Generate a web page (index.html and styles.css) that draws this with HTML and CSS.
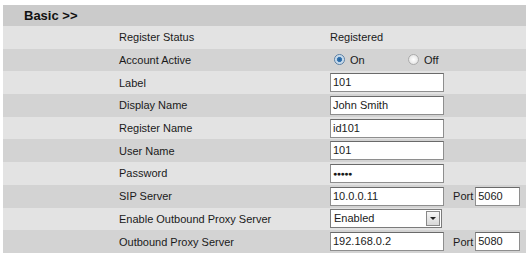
FILE: index.html
```html
<!DOCTYPE html>
<html lang="en">
<head>
    <meta charset="UTF-8">
    <title>Basic Account Settings</title>
    <link rel="stylesheet" href="styles.css">
</head>
<body>
    <table class="settings">
        <tr class="head">
            <td colspan="2">Basic &gt;&gt;</td>
        </tr>
        <tr class="light">
            <td class="name">Register Status</td>
            <td class="value">Registered</td>
        </tr>
        <tr class="dark">
            <td class="name">Account Active</td>
            <td class="value">
                <label class="radio"><span class="dot on"></span>On</label>
                <label class="radio"><span class="dot"></span>Off</label>
            </td>
        </tr>
        <tr class="light">
            <td class="name">Label</td>
            <td class="value"><span class="field">101</span></td>
        </tr>
        <tr class="dark">
            <td class="name">Display Name</td>
            <td class="value"><span class="field">John Smith</span></td>
        </tr>
        <tr class="light">
            <td class="name">Register Name</td>
            <td class="value"><span class="field">id101</span></td>
        </tr>
        <tr class="dark">
            <td class="name">User Name</td>
            <td class="value"><span class="field">101</span></td>
        </tr>
        <tr class="light">
            <td class="name">Password</td>
            <td class="value"><span class="field pass">&#9679;&#9679;&#9679;&#9679;&#9679;</span></td>
        </tr>
        <tr class="dark">
            <td class="name">SIP Server</td>
            <td class="value">
                <span class="field">10.0.0.11</span>
                <span class="port">Port</span><span class="field small">5060</span>
            </td>
        </tr>
        <tr class="light">
            <td class="name">Enable Outbound Proxy Server</td>
            <td class="value">
                <span class="select">Enabled<span class="arrow"></span></span>
            </td>
        </tr>
        <tr class="dark">
            <td class="name">Outbound Proxy Server</td>
            <td class="value">
                <span class="field">192.168.0.2</span>
                <span class="port">Port</span><span class="field small">5080</span>
            </td>
        </tr>
    </table>
</body>
</html>
```

FILE: styles.css
```css
body {
    margin: 0;
    padding: 5px 4px 0 3px;
    background: #ffffff;
    font-family: "Liberation Sans", Arial, sans-serif;
    font-size: 11px;
    color: #1a1a1a;
}
.settings {
    width: 523px;
    border-collapse: collapse;
}
.settings td {
    padding: 0;
    height: 22.7px;
    vertical-align: middle;
}
.head td {
    height: 21px;
    background: #cbcbcb;
    padding-left: 21px;
    font-weight: bold;
    font-size: 13px;
    color: #111;
}
.light td {
    background: #e3e3e3;
}
.dark td {
    background: #d3d3d3;
}
.name {
    width: 211px;
    padding-left: 116px !important;
}
.value {
    white-space: nowrap;
}
.field {
    display: inline-block;
    box-sizing: border-box;
    width: 114px;
    height: 19px;
    line-height: 17px;
    padding-left: 2px;
    background: #fff;
    border: 1px solid #8e8e8e;
    border-top-color: #6a6a6a;
    vertical-align: middle;
}
.field.small {
    width: 45px;
    margin-left: 2px;
}
.pass {
    font-size: 7px;
    letter-spacing: -0.5px;
}
.port {
    margin-left: 6px;
    vertical-align: middle;
}
.radio {
    display: inline-block;
    width: 71px;
}
.dot {
    display: inline-block;
    box-sizing: border-box;
    width: 11px;
    height: 11px;
    margin: 0 5px 0 4px;
    border-radius: 50%;
    border: 1px solid #aaa;
    background: radial-gradient(circle, #fff 0, #ddd 100%);
    vertical-align: -1px;
}
.dot.on {
    border-color: #5a7fa3;
    background: radial-gradient(circle, #1f5d97 0, #3b78b2 35%, #bcd3e8 45%, #eef3f8 100%);
}
.select {
    display: inline-block;
    position: relative;
    box-sizing: border-box;
    width: 112px;
    height: 19px;
    line-height: 17px;
    padding-left: 3px;
    background: #fff;
    border: 1px solid #7b7b7b;
    vertical-align: middle;
}
.arrow {
    position: absolute;
    right: 1px;
    top: 1px;
    width: 14px;
    height: 15px;
    box-sizing: border-box;
    border: 1px solid #888;
    background: linear-gradient(#f6f6f6, #d8d8d8);
}
.arrow::after {
    content: "";
    position: absolute;
    left: 3px;
    top: 5px;
    border-left: 3px solid transparent;
    border-right: 3px solid transparent;
    border-top: 3px solid #222;
}
```
